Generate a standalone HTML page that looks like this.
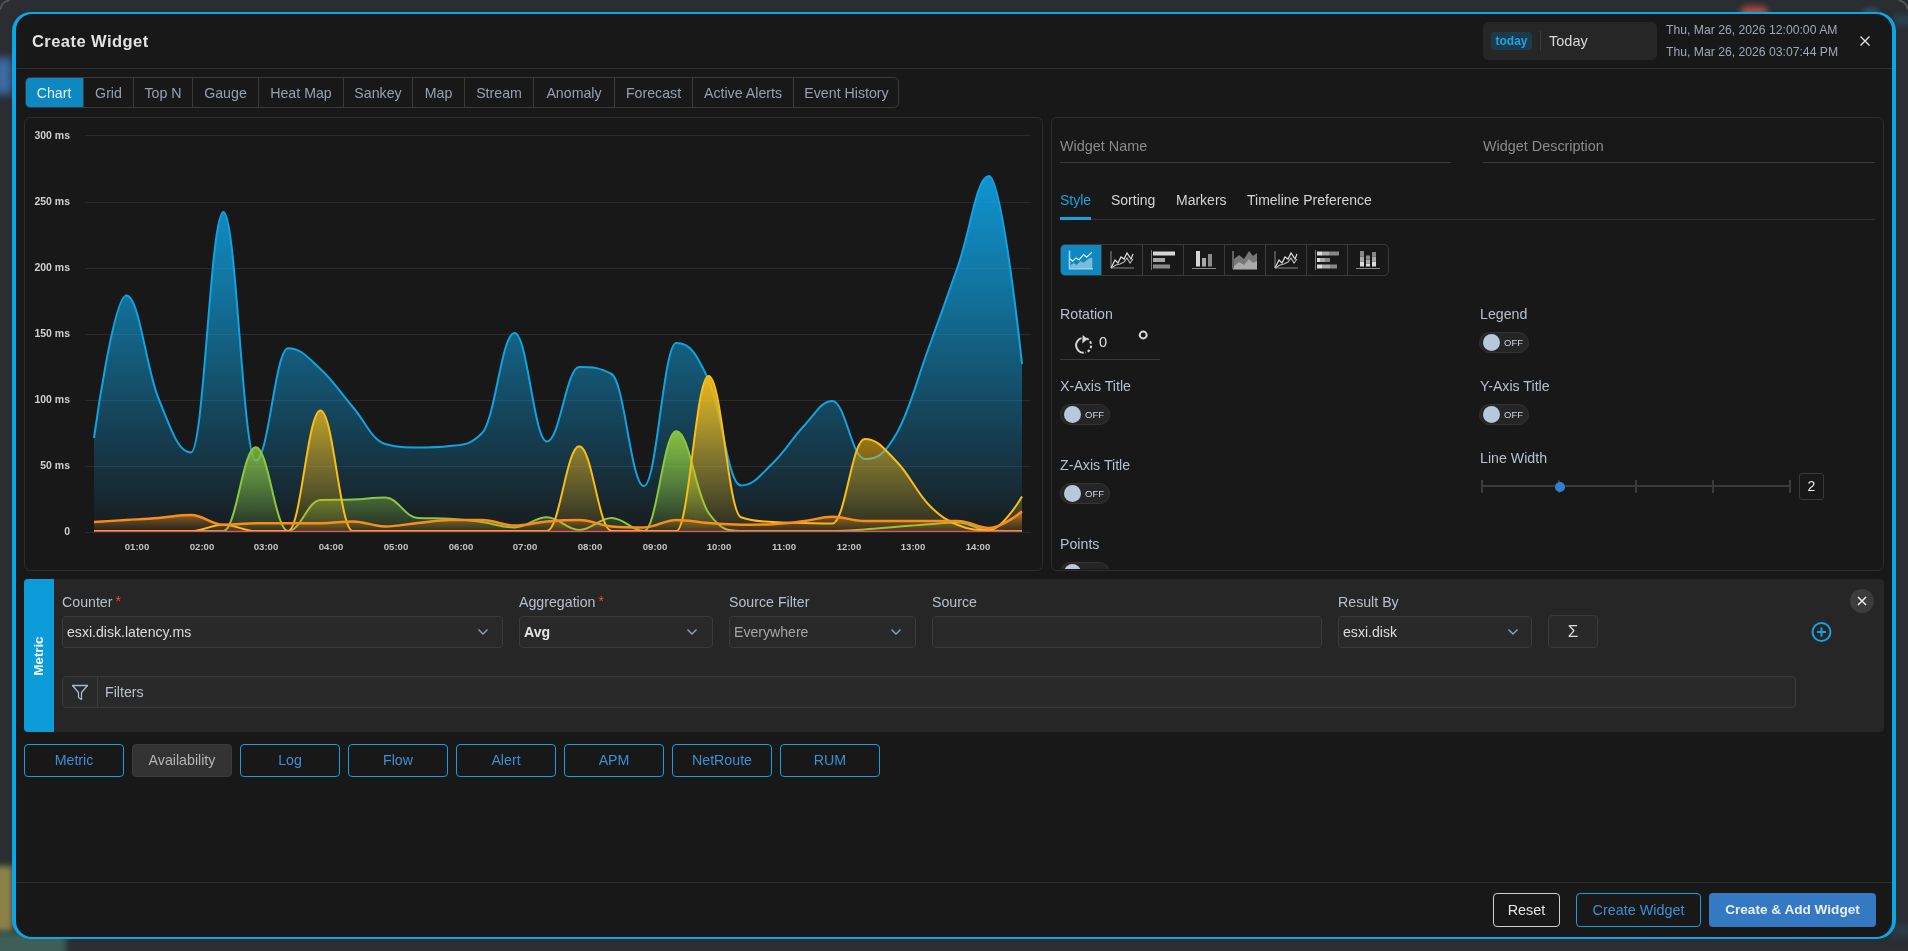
<!DOCTYPE html>
<html><head><meta charset="utf-8"><style>
*{margin:0;padding:0;box-sizing:border-box}
html,body{width:1908px;height:951px;overflow:hidden;background:#2a2d31;font-family:"Liberation Sans",sans-serif}
.abs{position:absolute}
#outer{position:absolute;left:12px;top:12px;width:1884px;height:927px;border-radius:19px;background:#0ba6e8}
#modal{position:absolute;left:16px;top:14px;width:1876px;height:923px;border-radius:16px;background:#181818;overflow:hidden}
.ylab{position:absolute;left:20px;width:50px;text-align:right;font-size:10.5px;font-weight:bold;color:#cfcfcf;line-height:16px;white-space:nowrap}
.xlab{position:absolute;top:539px;width:60px;text-align:center;font-size:9.6px;font-weight:bold;color:#c4c4c4;line-height:16px}
#tabs{position:absolute;left:25px;top:77px;width:874px;height:31px;border:1px solid #3a3a3a;border-radius:5px;overflow:hidden}
.tab{position:absolute;top:0;height:29px;line-height:30px;text-align:center;font-size:14.2px;color:#94a0b2;white-space:nowrap}
.tab.act{background:#0e88c0;color:#e6eef5}
.box{position:absolute;border:1px solid #2e2e2e;border-radius:6px}
.lbl{position:absolute;font-size:14.2px;color:#b4c0d0;white-space:nowrap;line-height:16px}
.tog{position:absolute;width:50px;height:21px;border-radius:11px;background:#252525;border:1px solid #343434}
.tog .knob{position:absolute;left:3px;top:1px;width:17px;height:17px;border-radius:50%;background:#b8c8dc}
.tog span{position:absolute;left:24px;top:0;line-height:19px;font-size:9.5px;color:#cfd6df}
.sel{position:absolute;top:616px;height:32px;border:1px solid #3a3a3a;border-radius:4px;background:#292929}
.sel .v{position:absolute;left:4px;top:0;line-height:30px;font-size:14.1px;color:#dcdcdc;white-space:nowrap}
.sel svg{position:absolute;top:11px}
.req{color:#f04a3a;font-size:14px;margin-left:3px;position:relative;top:-1px}
.cbtn{position:absolute;top:744px;width:100px;height:33px;border:1px solid #129fe0;border-radius:4px;text-align:center;line-height:31px;font-size:14.2px;color:#3b8fd6}
.cbtn.av{border-color:#3b3b3b;background:#333;color:#b4b4b4}
.fbtn{position:absolute;top:893px;height:34px;border-radius:4px;text-align:center;line-height:32px;font-size:14.4px;white-space:nowrap}
</style></head><body><div id="wrap" style="position:absolute;left:0;top:0;width:1908px;height:951px;will-change:transform">
<div class="abs" style="left:-6px;top:58px;width:18px;height:36px;background:#3d6da6;filter:blur(4px)"></div>
<div class="abs" style="left:-6px;top:866px;width:19px;height:66px;background:#8c8249;filter:blur(3px)"></div>
<div class="abs" style="left:-6px;top:932px;width:72px;height:30px;background:#3f5f56;filter:blur(3px)"></div>
<div class="abs" style="left:1740px;top:6px;width:28px;height:14px;border-radius:7px;background:#c05048;filter:blur(3px);opacity:0.85"></div>
<div class="abs" style="left:1863px;top:8px;width:16px;height:8px;border-radius:4px;background:#2f5a6a;filter:blur(2.5px);opacity:0.8"></div>
<div class="abs" style="left:1893px;top:15px;width:22px;height:10px;background:#2b4a58;filter:blur(3px);opacity:0.8"></div>
<svg class="abs" style="left:0;top:0" width="1908" height="30" viewBox="0 0 1908 30"><path d="M0.3,9.5 A10.5,10.5 0 0,1 9.5,0.3" fill="none" stroke="#55585b" stroke-width="1.6"/><path d="M1898.5,0.3 A10.5,10.5 0 0,1 1907.7,9.5" fill="none" stroke="#55585b" stroke-width="1.6"/></svg>
<div class="abs" style="left:1890px;top:925px;width:30px;height:12px;background:#2b4a58;filter:blur(4px);opacity:0.6"></div>
<div id="outer"></div>
<div id="modal"></div>
<!-- header -->
<div class="abs" style="left:32px;top:31px;font-size:16.5px;font-weight:bold;letter-spacing:0.45px;color:#e2e2e2;line-height:20px;white-space:nowrap">Create Widget</div>
<div class="abs" style="left:1483px;top:22px;width:174px;height:38px;border-radius:5px;background:#262626"></div>
<div class="abs" style="left:1491px;top:32px;width:41px;height:18px;border-radius:3px;background:#1b3a4c;color:#1ea3df;font-size:12px;font-weight:bold;line-height:18px;text-align:center">today</div>
<div class="abs" style="left:1540px;top:31px;width:1px;height:20px;background:#3a3a3a"></div>
<div class="abs" style="left:1549px;top:32px;font-size:14.5px;color:#d8d8d8;line-height:18px">Today</div>
<div class="abs" style="left:1666px;top:22px;font-size:12.2px;color:#9ca7b7;line-height:16px;white-space:nowrap">Thu, Mar 26, 2026 12:00:00 AM</div>
<div class="abs" style="left:1666px;top:44px;font-size:12.2px;color:#9ca7b7;line-height:16px;white-space:nowrap">Thu, Mar 26, 2026 03:07:44 PM</div>
<svg class="abs" style="left:1859px;top:35px" width="12" height="12" viewBox="0 0 12 12"><path d="M1.5,1.5 L10.5,10.5 M10.5,1.5 L1.5,10.5" stroke="#e0e0e0" stroke-width="1.4"/></svg>
<div class="abs" style="left:16px;top:68px;width:1876px;height:1px;background:#2f2f2f"></div>
<!-- tabs -->
<div id="tabs"><div class="tab act" style="left:-1px;width:58px;">Chart</div><div class="tab" style="left:57px;width:50px;border-left:1px solid #3a3a3a;">Grid</div><div class="tab" style="left:107px;width:59px;border-left:1px solid #3a3a3a;">Top N</div><div class="tab" style="left:166px;width:66px;border-left:1px solid #3a3a3a;">Gauge</div><div class="tab" style="left:232px;width:85px;border-left:1px solid #3a3a3a;">Heat Map</div><div class="tab" style="left:317px;width:69px;border-left:1px solid #3a3a3a;">Sankey</div><div class="tab" style="left:386px;width:52px;border-left:1px solid #3a3a3a;">Map</div><div class="tab" style="left:438px;width:69px;border-left:1px solid #3a3a3a;">Stream</div><div class="tab" style="left:507px;width:81px;border-left:1px solid #3a3a3a;">Anomaly</div><div class="tab" style="left:588px;width:78px;border-left:1px solid #3a3a3a;">Forecast</div><div class="tab" style="left:666px;width:101px;border-left:1px solid #3a3a3a;">Active Alerts</div><div class="tab" style="left:767px;width:106px;border-left:1px solid #3a3a3a;">Event History</div></div>
<!-- chart box -->
<div class="box" style="left:24px;top:117px;width:1019px;height:454px"></div>
<svg class="abs" style="left:0;top:0" width="1100" height="600" viewBox="0 0 1100 600">
<defs>
<linearGradient id="gb" x1="0" y1="0" x2="0" y2="1"><stop offset="0" stop-color="#0ea5e9" stop-opacity="0.88"/><stop offset="0.35" stop-color="#0ea5e9" stop-opacity="0.62"/><stop offset="0.65" stop-color="#0ea5e9" stop-opacity="0.34"/><stop offset="1" stop-color="#0ea5e9" stop-opacity="0.03"/></linearGradient>
<linearGradient id="gg" x1="0" y1="0" x2="0" y2="1"><stop offset="0" stop-color="#8cc63f" stop-opacity="0.95"/><stop offset="0.5" stop-color="#8cc63f" stop-opacity="0.55"/><stop offset="1" stop-color="#8cc63f" stop-opacity="0.1"/></linearGradient>
<linearGradient id="gy" x1="0" y1="0" x2="0" y2="1"><stop offset="0" stop-color="#f7bb14" stop-opacity="0.95"/><stop offset="0.5" stop-color="#f7bb14" stop-opacity="0.5"/><stop offset="1" stop-color="#f7bb14" stop-opacity="0.08"/></linearGradient>
<linearGradient id="go" x1="0" y1="0" x2="0" y2="1"><stop offset="0" stop-color="#f7931e" stop-opacity="0.7"/><stop offset="0.5" stop-color="#f7931e" stop-opacity="0.3"/><stop offset="1" stop-color="#f7931e" stop-opacity="0.05"/></linearGradient>
</defs>
<line x1="85" y1="135.5" x2="1031" y2="135.5" stroke="#2b2b2b" stroke-width="1"/><line x1="85" y1="202.5" x2="1031" y2="202.5" stroke="#2b2b2b" stroke-width="1"/><line x1="85" y1="268.5" x2="1031" y2="268.5" stroke="#2b2b2b" stroke-width="1"/><line x1="85" y1="334.5" x2="1031" y2="334.5" stroke="#2b2b2b" stroke-width="1"/><line x1="85" y1="400.5" x2="1031" y2="400.5" stroke="#2b2b2b" stroke-width="1"/><line x1="85" y1="466.5" x2="1031" y2="466.5" stroke="#2b2b2b" stroke-width="1"/><line x1="85" y1="532.5" x2="1031" y2="532.5" stroke="#2b2b2b" stroke-width="1"/><path d="M94.00,438.00 C94.00,438.00 113.41,295.50 126.35,295.50 C139.29,295.50 145.76,367.62 158.70,399.00 C171.64,430.38 178.11,452.40 191.05,452.40 C203.99,452.40 210.46,212.00 223.40,212.00 C236.34,212.00 242.81,460.50 255.75,460.50 C268.69,460.50 275.16,348.20 288.10,348.20 C301.04,348.20 307.51,357.24 320.45,369.00 C333.39,380.76 339.86,392.00 352.80,407.00 C365.74,422.00 372.21,440.50 385.15,444.00 C398.09,447.50 404.56,447.50 417.50,447.50 C430.44,447.50 436.91,447.50 449.85,446.00 C462.79,444.50 469.26,446.00 482.20,433.00 C495.14,420.00 501.61,333.00 514.55,333.00 C527.49,333.00 533.96,441.50 546.90,441.50 C559.84,441.50 566.31,367.00 579.25,367.00 C592.19,367.00 598.66,367.00 611.60,374.00 C624.54,381.00 631.01,486.00 643.95,486.00 C656.89,486.00 663.36,343.00 676.30,343.00 C689.24,343.00 695.71,351.50 708.65,380.00 C721.59,408.50 728.06,485.50 741.00,485.50 C753.80,485.50 760.20,475.16 773.00,463.00 C785.80,450.84 792.20,438.08 805.00,424.70 C815.92,413.28 821.38,401.00 832.30,401.00 C845.30,401.00 851.80,459.00 864.80,459.00 C877.68,459.00 884.12,455.17 897.00,432.70 C909.80,410.37 916.20,381.98 929.00,347.00 C940.60,315.30 946.40,299.06 958.00,266.00 C970.40,230.66 976.60,176.00 989.00,176.00 C1002.20,176.00 1022.00,364.00 1022.00,364.00 L1022.0,531 L94.0,531 Z" fill="url(#gb)"/><path d="M94.00,438.00 C94.00,438.00 113.41,295.50 126.35,295.50 C139.29,295.50 145.76,367.62 158.70,399.00 C171.64,430.38 178.11,452.40 191.05,452.40 C203.99,452.40 210.46,212.00 223.40,212.00 C236.34,212.00 242.81,460.50 255.75,460.50 C268.69,460.50 275.16,348.20 288.10,348.20 C301.04,348.20 307.51,357.24 320.45,369.00 C333.39,380.76 339.86,392.00 352.80,407.00 C365.74,422.00 372.21,440.50 385.15,444.00 C398.09,447.50 404.56,447.50 417.50,447.50 C430.44,447.50 436.91,447.50 449.85,446.00 C462.79,444.50 469.26,446.00 482.20,433.00 C495.14,420.00 501.61,333.00 514.55,333.00 C527.49,333.00 533.96,441.50 546.90,441.50 C559.84,441.50 566.31,367.00 579.25,367.00 C592.19,367.00 598.66,367.00 611.60,374.00 C624.54,381.00 631.01,486.00 643.95,486.00 C656.89,486.00 663.36,343.00 676.30,343.00 C689.24,343.00 695.71,351.50 708.65,380.00 C721.59,408.50 728.06,485.50 741.00,485.50 C753.80,485.50 760.20,475.16 773.00,463.00 C785.80,450.84 792.20,438.08 805.00,424.70 C815.92,413.28 821.38,401.00 832.30,401.00 C845.30,401.00 851.80,459.00 864.80,459.00 C877.68,459.00 884.12,455.17 897.00,432.70 C909.80,410.37 916.20,381.98 929.00,347.00 C940.60,315.30 946.40,299.06 958.00,266.00 C970.40,230.66 976.60,176.00 989.00,176.00 C1002.20,176.00 1022.00,364.00 1022.00,364.00" fill="none" stroke="#0fa3e2" stroke-width="2" stroke-linejoin="round"/><path d="M94.00,531.00 C94.00,531.00 113.41,531.00 126.35,531.00 C139.29,531.00 145.76,531.00 158.70,531.00 C171.64,531.00 178.11,531.00 191.05,531.00 C203.99,531.00 210.46,531.00 223.40,531.00 C236.34,531.00 242.81,447.30 255.75,447.30 C268.69,447.30 275.16,531.00 288.10,531.00 C301.04,531.00 307.51,500.40 320.45,500.00 C333.39,499.60 339.86,500.00 352.80,499.60 C365.74,499.20 372.21,497.40 385.15,497.40 C398.09,497.40 404.56,517.30 417.50,518.00 C430.44,518.70 436.91,518.00 449.85,518.70 C462.79,519.40 469.26,520.26 482.20,522.00 C495.14,523.74 501.61,527.40 514.55,527.40 C527.49,527.40 533.96,517.30 546.90,517.30 C559.84,517.30 566.31,530.00 579.25,530.00 C592.19,530.00 598.66,517.90 611.60,517.90 C624.54,517.90 631.01,531.00 643.95,531.00 C656.89,531.00 663.36,431.20 676.30,431.20 C689.24,431.20 695.71,495.00 708.65,513.00 C721.59,531.00 728.06,531.00 741.00,531.00 C753.80,531.00 760.20,531.00 773.00,531.00 C785.80,531.00 792.20,531.00 805.00,531.00 C815.92,531.00 821.38,531.00 832.30,531.00 C845.30,531.00 851.80,530.24 864.80,529.40 C877.68,528.56 884.12,527.84 897.00,526.80 C909.80,525.76 916.20,525.10 929.00,524.20 C940.60,523.38 946.40,522.50 958.00,522.50 C970.40,522.50 976.60,530.00 989.00,530.50 C1002.20,531.00 1022.00,531.00 1022.00,531.00 L1022.0,531 L94.0,531 Z" fill="url(#gg)"/><path d="M94.00,531.00 C94.00,531.00 113.41,531.00 126.35,531.00 C139.29,531.00 145.76,531.00 158.70,531.00 C171.64,531.00 178.11,531.00 191.05,531.00 C203.99,531.00 210.46,531.00 223.40,531.00 C236.34,531.00 242.81,447.30 255.75,447.30 C268.69,447.30 275.16,531.00 288.10,531.00 C301.04,531.00 307.51,500.40 320.45,500.00 C333.39,499.60 339.86,500.00 352.80,499.60 C365.74,499.20 372.21,497.40 385.15,497.40 C398.09,497.40 404.56,517.30 417.50,518.00 C430.44,518.70 436.91,518.00 449.85,518.70 C462.79,519.40 469.26,520.26 482.20,522.00 C495.14,523.74 501.61,527.40 514.55,527.40 C527.49,527.40 533.96,517.30 546.90,517.30 C559.84,517.30 566.31,530.00 579.25,530.00 C592.19,530.00 598.66,517.90 611.60,517.90 C624.54,517.90 631.01,531.00 643.95,531.00 C656.89,531.00 663.36,431.20 676.30,431.20 C689.24,431.20 695.71,495.00 708.65,513.00 C721.59,531.00 728.06,531.00 741.00,531.00 C753.80,531.00 760.20,531.00 773.00,531.00 C785.80,531.00 792.20,531.00 805.00,531.00 C815.92,531.00 821.38,531.00 832.30,531.00 C845.30,531.00 851.80,530.24 864.80,529.40 C877.68,528.56 884.12,527.84 897.00,526.80 C909.80,525.76 916.20,525.10 929.00,524.20 C940.60,523.38 946.40,522.50 958.00,522.50 C970.40,522.50 976.60,530.00 989.00,530.50 C1002.20,531.00 1022.00,531.00 1022.00,531.00" fill="none" stroke="#8cc63f" stroke-width="2" stroke-linejoin="round"/><path d="M94.00,531.00 C94.00,531.00 113.41,531.00 126.35,531.00 C139.29,531.00 145.76,531.00 158.70,531.00 C171.64,531.00 178.11,531.00 191.05,531.00 C203.99,531.00 210.46,524.70 223.40,524.70 C236.34,524.70 242.81,531.00 255.75,531.00 C268.69,531.00 275.16,531.00 288.10,531.00 C301.04,531.00 307.51,410.40 320.45,410.40 C333.39,410.40 339.86,531.00 352.80,531.00 C365.74,531.00 372.21,531.00 385.15,531.00 C398.09,531.00 404.56,531.00 417.50,531.00 C430.44,531.00 436.91,531.00 449.85,531.00 C462.79,531.00 469.26,531.00 482.20,531.00 C495.14,531.00 501.61,531.00 514.55,531.00 C527.49,531.00 533.96,531.00 546.90,531.00 C559.84,531.00 566.31,446.30 579.25,446.30 C592.19,446.30 598.66,531.00 611.60,531.00 C624.54,531.00 631.01,531.00 643.95,531.00 C656.89,531.00 663.36,531.00 676.30,531.00 C689.24,531.00 695.71,376.00 708.65,376.00 C721.59,376.00 728.06,512.60 741.00,517.30 C753.80,522.00 760.20,521.00 773.00,522.00 C785.80,523.00 792.20,522.65 805.00,523.00 C815.92,523.29 821.38,523.60 832.30,523.60 C845.30,523.60 851.80,439.00 864.80,439.00 C877.68,439.00 884.12,448.76 897.00,462.00 C909.80,475.16 916.20,491.78 929.00,505.00 C940.60,516.98 946.40,519.80 958.00,525.00 C970.40,530.20 976.60,530.20 989.00,530.20 C1002.20,530.20 1022.00,496.60 1022.00,496.60 L1022.0,531 L94.0,531 Z" fill="url(#gy)"/><path d="M94.00,531.00 C94.00,531.00 113.41,531.00 126.35,531.00 C139.29,531.00 145.76,531.00 158.70,531.00 C171.64,531.00 178.11,531.00 191.05,531.00 C203.99,531.00 210.46,524.70 223.40,524.70 C236.34,524.70 242.81,531.00 255.75,531.00 C268.69,531.00 275.16,531.00 288.10,531.00 C301.04,531.00 307.51,410.40 320.45,410.40 C333.39,410.40 339.86,531.00 352.80,531.00 C365.74,531.00 372.21,531.00 385.15,531.00 C398.09,531.00 404.56,531.00 417.50,531.00 C430.44,531.00 436.91,531.00 449.85,531.00 C462.79,531.00 469.26,531.00 482.20,531.00 C495.14,531.00 501.61,531.00 514.55,531.00 C527.49,531.00 533.96,531.00 546.90,531.00 C559.84,531.00 566.31,446.30 579.25,446.30 C592.19,446.30 598.66,531.00 611.60,531.00 C624.54,531.00 631.01,531.00 643.95,531.00 C656.89,531.00 663.36,531.00 676.30,531.00 C689.24,531.00 695.71,376.00 708.65,376.00 C721.59,376.00 728.06,512.60 741.00,517.30 C753.80,522.00 760.20,521.00 773.00,522.00 C785.80,523.00 792.20,522.65 805.00,523.00 C815.92,523.29 821.38,523.60 832.30,523.60 C845.30,523.60 851.80,439.00 864.80,439.00 C877.68,439.00 884.12,448.76 897.00,462.00 C909.80,475.16 916.20,491.78 929.00,505.00 C940.60,516.98 946.40,519.80 958.00,525.00 C970.40,530.20 976.60,530.20 989.00,530.20 C1002.20,530.20 1022.00,496.60 1022.00,496.60" fill="none" stroke="#fbbd17" stroke-width="2" stroke-linejoin="round"/><path d="M94.00,521.90 C94.00,521.90 113.41,520.78 126.35,520.00 C139.29,519.22 145.76,518.98 158.70,518.00 C171.64,517.02 178.11,515.10 191.05,515.10 C203.99,515.10 210.46,524.70 223.40,524.70 C236.34,524.70 242.81,523.30 255.75,523.30 C268.69,523.30 275.16,523.30 288.10,523.30 C301.04,523.30 307.51,523.30 320.45,523.30 C333.39,523.30 339.86,521.40 352.80,521.40 C365.74,521.40 372.21,526.40 385.15,526.40 C398.09,526.40 404.56,524.28 417.50,523.00 C430.44,521.72 436.91,520.00 449.85,520.00 C462.79,520.00 469.26,520.00 482.20,520.00 C495.14,520.00 501.61,525.50 514.55,525.50 C527.49,525.50 533.96,522.50 546.90,521.40 C559.84,520.30 566.31,520.00 579.25,520.00 C592.19,520.00 598.66,525.40 611.60,526.40 C624.54,527.40 631.01,527.40 643.95,527.40 C656.89,527.40 663.36,520.00 676.30,520.00 C689.24,520.00 695.71,522.06 708.65,523.00 C721.59,523.94 728.06,524.70 741.00,524.70 C753.80,524.70 760.20,524.70 773.00,524.20 C785.80,523.70 792.20,522.62 805.00,521.00 C815.92,519.62 821.38,516.70 832.30,516.70 C845.30,516.70 851.80,521.00 864.80,521.00 C877.68,521.00 884.12,521.00 897.00,521.00 C909.80,521.00 916.20,521.00 929.00,521.00 C940.60,521.00 946.40,521.00 958.00,521.00 C970.40,521.00 976.60,528.00 989.00,528.00 C1002.20,528.00 1022.00,511.30 1022.00,511.30 L1022.0,531 L94.0,531 Z" fill="url(#go)"/><path d="M94.00,521.90 C94.00,521.90 113.41,520.78 126.35,520.00 C139.29,519.22 145.76,518.98 158.70,518.00 C171.64,517.02 178.11,515.10 191.05,515.10 C203.99,515.10 210.46,524.70 223.40,524.70 C236.34,524.70 242.81,523.30 255.75,523.30 C268.69,523.30 275.16,523.30 288.10,523.30 C301.04,523.30 307.51,523.30 320.45,523.30 C333.39,523.30 339.86,521.40 352.80,521.40 C365.74,521.40 372.21,526.40 385.15,526.40 C398.09,526.40 404.56,524.28 417.50,523.00 C430.44,521.72 436.91,520.00 449.85,520.00 C462.79,520.00 469.26,520.00 482.20,520.00 C495.14,520.00 501.61,525.50 514.55,525.50 C527.49,525.50 533.96,522.50 546.90,521.40 C559.84,520.30 566.31,520.00 579.25,520.00 C592.19,520.00 598.66,525.40 611.60,526.40 C624.54,527.40 631.01,527.40 643.95,527.40 C656.89,527.40 663.36,520.00 676.30,520.00 C689.24,520.00 695.71,522.06 708.65,523.00 C721.59,523.94 728.06,524.70 741.00,524.70 C753.80,524.70 760.20,524.70 773.00,524.20 C785.80,523.70 792.20,522.62 805.00,521.00 C815.92,519.62 821.38,516.70 832.30,516.70 C845.30,516.70 851.80,521.00 864.80,521.00 C877.68,521.00 884.12,521.00 897.00,521.00 C909.80,521.00 916.20,521.00 929.00,521.00 C940.60,521.00 946.40,521.00 958.00,521.00 C970.40,521.00 976.60,528.00 989.00,528.00 C1002.20,528.00 1022.00,511.30 1022.00,511.30" fill="none" stroke="#fa8c1c" stroke-width="2.5" stroke-linejoin="round"/><line x1="94" y1="531.4" x2="1022" y2="531.4" stroke="#e8506a" stroke-width="1.4"/></svg>
<div class="ylab" style="top:127px">300 ms</div><div class="ylab" style="top:193px">250 ms</div><div class="ylab" style="top:259px">200 ms</div><div class="ylab" style="top:325px">150 ms</div><div class="ylab" style="top:391px">100 ms</div><div class="ylab" style="top:457px">50 ms</div><div class="ylab" style="top:523px">0</div>
<div class="xlab" style="left:107px">01:00</div><div class="xlab" style="left:172px">02:00</div><div class="xlab" style="left:236px">03:00</div><div class="xlab" style="left:301px">04:00</div><div class="xlab" style="left:366px">05:00</div><div class="xlab" style="left:431px">06:00</div><div class="xlab" style="left:495px">07:00</div><div class="xlab" style="left:560px">08:00</div><div class="xlab" style="left:625px">09:00</div><div class="xlab" style="left:689px">10:00</div><div class="xlab" style="left:754px">11:00</div><div class="xlab" style="left:819px">12:00</div><div class="xlab" style="left:883px">13:00</div><div class="xlab" style="left:948px">14:00</div>
<!-- right panel -->
<div class="box" style="left:1051px;top:117px;width:833px;height:454px"></div>
<div class="abs" style="left:1060px;top:138px;font-size:14.4px;color:#8b8b8b;line-height:16px">Widget Name</div>
<div class="abs" style="left:1060px;top:162px;width:391px;height:1px;background:#3a3a3a"></div>
<div class="abs" style="left:1483px;top:138px;font-size:14.4px;color:#8b8b8b;line-height:16px">Widget Description</div>
<div class="abs" style="left:1483px;top:162px;width:392px;height:1px;background:#3a3a3a"></div>
<div class="abs" style="left:1060px;top:192px;font-size:14px;color:#19a2e2;line-height:16px">Style</div>
<div class="abs" style="left:1111px;top:192px;font-size:14px;color:#d4d4d4;line-height:16px">Sorting</div>
<div class="abs" style="left:1176px;top:192px;font-size:14px;color:#d4d4d4;line-height:16px">Markers</div>
<div class="abs" style="left:1247px;top:192px;font-size:14px;color:#d4d4d4;line-height:16px;white-space:nowrap">Timeline Preference</div>
<div class="abs" style="left:1060px;top:219px;width:815px;height:1px;background:#333"></div>
<div class="abs" style="left:1060px;top:217px;width:31px;height:3px;background:#14a1e2"></div>
<div class="abs" style="left:1060px;top:244px;width:329px;height:32px;border:1px solid #3a3a3a;border-radius:5px;overflow:hidden"><div class="abs" style="left:0px;top:0;width:41px;height:30px;background:#0e88c0;"></div><div class="abs" style="left:40px;top:0;width:41px;height:30px;border-left:1px solid #3a3a3a;"></div><div class="abs" style="left:81px;top:0;width:41px;height:30px;border-left:1px solid #3a3a3a;"></div><div class="abs" style="left:122px;top:0;width:41px;height:30px;border-left:1px solid #3a3a3a;"></div><div class="abs" style="left:163px;top:0;width:41px;height:30px;border-left:1px solid #3a3a3a;"></div><div class="abs" style="left:204px;top:0;width:41px;height:30px;border-left:1px solid #3a3a3a;"></div><div class="abs" style="left:245px;top:0;width:41px;height:30px;border-left:1px solid #3a3a3a;"></div><div class="abs" style="left:286px;top:0;width:42px;height:30px;border-left:1px solid #3a3a3a;"></div></div><svg class="abs" style="left:1060px;top:244px" width="330" height="32" viewBox="1060 244 330 32"><path d="M1069.5,250.5 V268.8 H1093" fill="none" stroke="#a8d4e8" stroke-width="1.6"/><path d="M1070.3,265.5 L1073.8,263.1 L1076.5,265.1 L1080.5,261.1 L1083.5,262.7 L1088.8,258.5 L1092.3,257.6 L1092.3,268.6 L1070.3,268.6 Z" fill="#8cc4dc" opacity="0.85"/><path d="M1070.3,258.9 L1072.5,261.1 L1076,258 L1079.1,259.8 L1083.5,254.5 L1086.6,257.2 L1091.9,252.3" fill="none" stroke="#e6f3f9" stroke-width="1.2"/><path d="M1111,251 V268 H1134" fill="none" stroke="#888" stroke-width="1"/><path d="M1111,268 L1115,260 L1118,263 L1121,257 L1124,259 L1127,253 L1131,259 L1133,254" fill="none" stroke="#ddd" stroke-width="1.2"/><path d="M1111,268 L1116,265 L1120,264 L1124,262 L1127,258 L1130,263 L1133,259" fill="none" stroke="#bbb" stroke-width="1.1"/><path d="M1151.5,250 V270" stroke="#777" stroke-width="1"/><rect x="1153" y="251.5" width="22" height="4" fill="#d6d6d6"/><rect x="1153" y="258" width="12" height="4" fill="#a8a8a8"/><rect x="1153" y="264.5" width="17" height="4" fill="#8a8a8a"/><rect x="1196" y="251" width="4" height="15.5" fill="#d6d6d6"/><rect x="1202" y="258" width="4" height="8.5" fill="#a8a8a8"/><rect x="1208" y="254" width="4" height="12.5" fill="#8a8a8a"/><path d="M1192,268.5 H1216" stroke="#888" stroke-width="1"/><path d="M1233,251 V269 H1257" fill="none" stroke="#aaa" stroke-width="1"/><path d="M1234,259 L1239,255 L1244,259 L1249,251 L1253,256 L1257,253 L1257,269 L1234,269 Z" fill="#777"/><path d="M1234,266 L1239,262 L1244,265 L1249,259 L1253,263 L1257,261 L1257,269 L1234,269 Z" fill="#aaa"/><path d="M1275,251 V268 H1298" fill="none" stroke="#888" stroke-width="1"/><path d="M1275,268 L1279,260 L1282,263 L1285,257 L1288,259 L1291,253 L1295,259 L1297,254" fill="none" stroke="#ddd" stroke-width="1.2"/><path d="M1275,268 L1280,265 L1284,264 L1288,262 L1291,258 L1294,263 L1297,259" fill="none" stroke="#bbb" stroke-width="1.1"/><path d="M1315.5,250 V270" stroke="#777" stroke-width="1"/><rect x="1317" y="251.5" width="5" height="4" fill="#ddd"/><rect x="1322" y="251.5" width="7" height="4" fill="#aaa"/><rect x="1329" y="251.5" width="10" height="4" fill="#888"/><rect x="1317" y="258" width="3" height="4" fill="#ddd"/><rect x="1320" y="258" width="5" height="4" fill="#aaa"/><rect x="1325" y="258" width="5" height="4" fill="#888"/><rect x="1317" y="264.5" width="5" height="4" fill="#ddd"/><rect x="1322" y="264.5" width="8" height="4" fill="#aaa"/><rect x="1330" y="264.5" width="7" height="4" fill="#888"/><rect x="1360" y="261.5" width="4" height="5" fill="#ddd"/><rect x="1360" y="256.5" width="4" height="5" fill="#aaa"/><rect x="1360" y="251.0" width="4" height="5.5" fill="#888"/><rect x="1366" y="263.5" width="4" height="3" fill="#ddd"/><rect x="1366" y="259.5" width="4" height="4" fill="#aaa"/><rect x="1366" y="255.5" width="4" height="4" fill="#888"/><rect x="1372" y="261.5" width="4" height="5" fill="#ddd"/><rect x="1372" y="256.5" width="4" height="5" fill="#aaa"/><rect x="1372" y="252.0" width="4" height="4.5" fill="#888"/><path d="M1356,268.5 H1380" stroke="#888" stroke-width="1"/></svg>
<div class="lbl" style="left:1060px;top:306px">Rotation</div>
<svg class="abs" style="left:1073px;top:333px" width="22" height="22" viewBox="1073 333 22 22"><path d="M1083.7,352.8 A7.5,7.5 0 0,1 1081.5,338.1" fill="none" stroke="#d6d6d6" stroke-width="2"/><path d="M1086.5,338.4 A7.5,7.5 0 0,1 1085.5,352.6" fill="none" stroke="#d6d6d6" stroke-width="2" stroke-dasharray="2.6,1.9"/><path d="M1082.6,335 L1087.6,339 L1082.3,343.5 Z" fill="#d6d6d6"/></svg>
<div class="abs" style="left:1099px;top:334px;font-size:14.5px;color:#e0e0e0;line-height:16px">0</div>
<svg class="abs" style="left:1137px;top:329px" width="12" height="12" viewBox="0 0 12 12"><ellipse cx="6.2" cy="6" rx="3.5" ry="3.4" fill="none" stroke="#d8d8d8" stroke-width="2"/></svg>
<div class="abs" style="left:1060px;top:359px;width:100px;height:1px;background:#3a3a3a"></div>
<div class="lbl" style="left:1060px;top:378px">X-Axis Title</div>
<div class="lbl" style="left:1060px;top:457px">Z-Axis Title</div>
<div class="lbl" style="left:1060px;top:536px">Points</div>
<div class="lbl" style="left:1480px;top:306px">Legend</div>
<div class="lbl" style="left:1480px;top:378px">Y-Axis Title</div>
<div class="lbl" style="left:1480px;top:450px">Line Width</div>
<div class="tog" style="left:1060px;top:404px"><div class="knob"></div><span>OFF</span></div><div class="tog" style="left:1060px;top:483px"><div class="knob"></div><span>OFF</span></div><div class="abs" style="left:1052px;top:540px;width:100px;height:29px;overflow:hidden"><div class="tog" style="left:8px;top:22px"><div class="knob"></div><span>OFF</span></div></div><div class="tog" style="left:1479px;top:332px"><div class="knob"></div><span>OFF</span></div><div class="tog" style="left:1479px;top:404px"><div class="knob"></div><span>OFF</span></div>
<div class="abs" style="left:1482px;top:485px;width:308px;height:2px;background:#3a3a3a"></div><div class="abs" style="left:1481px;top:480px;width:2px;height:13px;background:#3a3a3a"></div><div class="abs" style="left:1558px;top:480px;width:2px;height:13px;background:#3a3a3a"></div><div class="abs" style="left:1635px;top:480px;width:2px;height:13px;background:#3a3a3a"></div><div class="abs" style="left:1712px;top:480px;width:2px;height:13px;background:#3a3a3a"></div><div class="abs" style="left:1789px;top:480px;width:2px;height:13px;background:#3a3a3a"></div><div class="abs" style="left:1555px;top:482px;width:10px;height:10px;border-radius:50%;background:#2f80d0"></div><div class="abs" style="left:1799px;top:473px;width:25px;height:27px;border:1px solid #3a3a3a;border-radius:3px;text-align:center;line-height:25px;font-size:14px;color:#e6e6e6">2</div>
<!-- metric section -->
<div class="abs" style="left:24px;top:579px;width:1860px;height:153px;border-radius:4px;background:#262626"></div>
<div class="abs" style="left:24px;top:579px;width:30px;height:153px;border-radius:4px 0 0 4px;background:#0d9cda"></div>
<div class="abs" style="left:1px;top:647px;width:76px;height:18px;transform:rotate(-90deg);text-align:center;font-size:13.2px;font-weight:bold;color:#f2f8fc;line-height:18px">Metric</div>
<div class="lbl" style="left:62px;top:594px">Counter<span class="req">*</span></div>
<div class="lbl" style="left:519px;top:594px">Aggregation<span class="req">*</span></div>
<div class="lbl" style="left:729px;top:594px">Source Filter</div>
<div class="lbl" style="left:932px;top:594px">Source</div>
<div class="lbl" style="left:1338px;top:594px">Result By</div>
<div class="sel" style="left:62px;width:441px"><div class="v">esxi.disk.latency.ms</div><svg style="left:414px" width="12" height="8" viewBox="0 0 12 8"><path d="M1.5,1.5 L6,6 L10.5,1.5" fill="none" stroke="#8ea3bd" stroke-width="1.4"/></svg></div>
<div class="sel" style="left:519px;width:194px"><div class="v" style="font-weight:bold;color:#e4e4e4">Avg</div><svg style="left:166px" width="12" height="8" viewBox="0 0 12 8"><path d="M1.5,1.5 L6,6 L10.5,1.5" fill="none" stroke="#8ea3bd" stroke-width="1.4"/></svg></div>
<div class="sel" style="left:729px;width:187px"><div class="v" style="color:#a6a6a6">Everywhere</div><svg style="left:160px" width="12" height="8" viewBox="0 0 12 8"><path d="M1.5,1.5 L6,6 L10.5,1.5" fill="none" stroke="#8ea3bd" stroke-width="1.4"/></svg></div>
<div class="sel" style="left:932px;width:390px"></div>
<div class="sel" style="left:1338px;width:194px"><div class="v">esxi.disk</div><svg style="left:168px" width="12" height="8" viewBox="0 0 12 8"><path d="M1.5,1.5 L6,6 L10.5,1.5" fill="none" stroke="#8ea3bd" stroke-width="1.4"/></svg></div>
<div class="sel" style="left:1548px;top:615px;width:50px;height:33px;text-align:center;font-size:17px;line-height:31px;color:#d8d8d8">&Sigma;</div>
<svg class="abs" style="left:1810px;top:620px" width="24" height="24" viewBox="0 0 24 24"><circle cx="11.5" cy="12" r="9" fill="none" stroke="#1aa0e2" stroke-width="2"/><path d="M11.5,7.5 V16.5 M7,12 H16" stroke="#1aa0e2" stroke-width="2"/></svg>
<div class="abs" style="left:1850px;top:589px;width:24px;height:24px;border-radius:50%;background:#3c3c3c"></div>
<svg class="abs" style="left:1856px;top:595px" width="12" height="12" viewBox="0 0 12 12"><path d="M2,2 L10,10 M10,2 L2,10" stroke="#e8e8e8" stroke-width="1.6"/></svg>
<div class="abs" style="left:62px;top:676px;width:1734px;height:32px;border:1px solid #3a3a3a;border-radius:4px;background:#292929"></div>
<div class="abs" style="left:97px;top:677px;width:1px;height:30px;background:#3a3a3a"></div>
<svg class="abs" style="left:71px;top:684px" width="18" height="17" viewBox="0 0 18 17"><path d="M1.5,1.5 H16.5 L10.5,8.5 V15.5 L7.5,13.5 V8.5 Z" fill="none" stroke="#a9b8c9" stroke-width="1.3" stroke-linejoin="round"/></svg>
<div class="abs" style="left:105px;top:684px;font-size:14.2px;color:#b6c0cd;line-height:16px">Filters</div>

<!-- category buttons -->
<div class="cbtn" style="left:24px">Metric</div><div class="cbtn av" style="left:132px">Availability</div><div class="cbtn" style="left:240px">Log</div><div class="cbtn" style="left:348px">Flow</div><div class="cbtn" style="left:456px">Alert</div><div class="cbtn" style="left:564px">APM</div><div class="cbtn" style="left:672px">NetRoute</div><div class="cbtn" style="left:780px">RUM</div>
<!-- footer -->
<div class="abs" style="left:16px;top:882px;width:1876px;height:1px;background:#2f2f2f"></div>
<div class="fbtn" style="left:1493px;width:67px;border:1px solid #cfcfcf;color:#e4e4e4">Reset</div>
<div class="fbtn" style="left:1576px;width:125px;border:1px solid #129fe0;color:#3b8fd6">Create Widget</div>
<div class="fbtn" style="left:1709px;width:167px;background:#3579c2;color:#e8eef6;line-height:34px;font-weight:bold;font-size:13.6px">Create &amp; Add Widget</div>
</div></body></html>
